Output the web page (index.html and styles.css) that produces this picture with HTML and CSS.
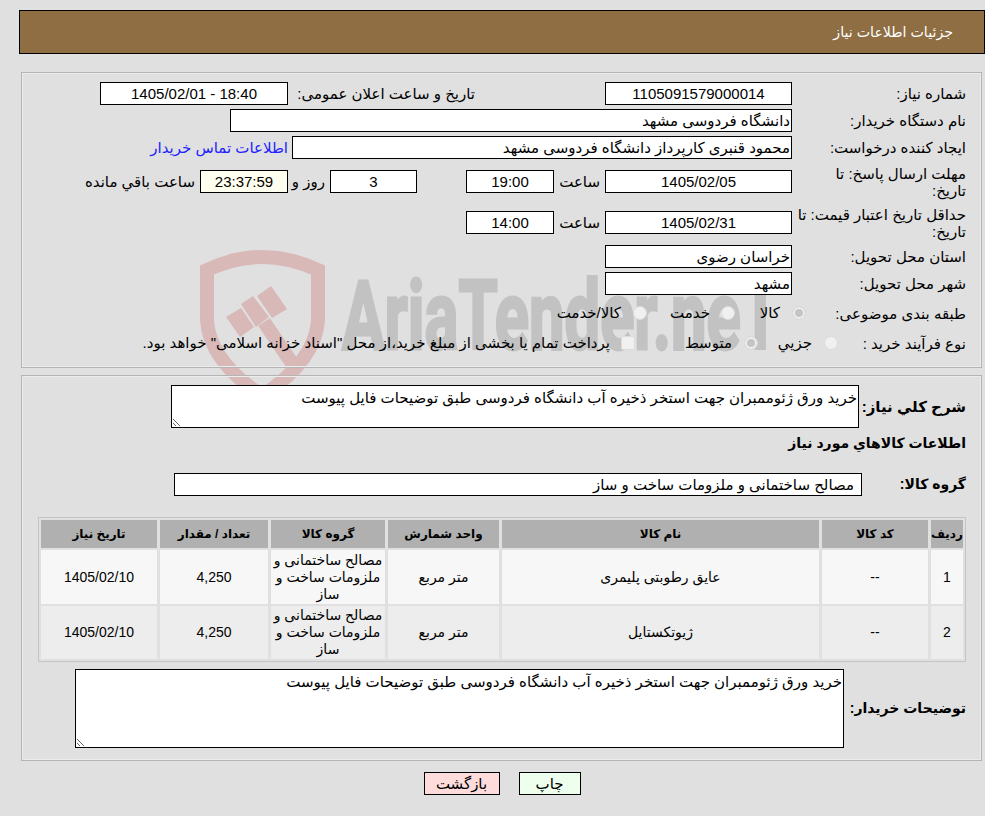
FILE: index.html
```html
<!DOCTYPE html>
<html lang="fa" dir="rtl">
<head>
  <meta charset="UTF-8" />
  <meta name="viewport" content="width=device-width, initial-scale=1.0"/>
  <title>جزئیات اطلاعات نیاز</title>
  <link rel="stylesheet" href="styles.css">
</head>
<body>

<!-- watermark behind the form -->
<svg class="watermark" width="985" height="816" viewBox="0 0 985 816" aria-hidden="true">
  <g fill="none" stroke="#d9b8b8" stroke-width="14">
    <path d="M207 270 Q262 244 318 270 L318 320 Q316 360 262 396 Q209 360 207 320 Z"/>
    <path d="M264 322 L298 372"/>
  </g>
  <g fill="#d9b8b8">
    <path d="M226 317 L241 308 L254 327 L240 337 Z"/>
    <path d="M241 304 L253 296 L269 317 L256 327 Z"/>
    <path d="M257 296 L271 286 L287 309 L272 318 Z"/>
  </g>
  <text class="wm-text" x="342" y="349" textLength="438" lengthAdjust="spacingAndGlyphs">AriaTender.neT</text>
</svg>

<div class="page-title">جزئیات اطلاعات نیاز</div>

<div class="panel panel-top">
  <div class="row">
    <div class="lbl">شماره نیاز:</div>
    <div class="box w-187 center">1105091579000014</div>
    <div class="lbl lbl-announce">تاریخ و ساعت اعلان عمومی:</div>
    <div class="box w-188 center">18:40 - 1405/02/01</div>
  </div>
  <div class="row">
    <div class="lbl">نام دستگاه خریدار:</div>
    <div class="box w-562">دانشگاه فردوسی مشهد</div>
  </div>
  <div class="row">
    <div class="lbl">ایجاد کننده درخواست:</div>
    <div class="box w-500">محمود قنبری کارپرداز دانشگاه فردوسی مشهد</div>
    <a class="contact" href="#">اطلاعات تماس خریدار</a>
  </div>
  <div class="row row-date">
    <div class="lbl lbl-two">مهلت ارسال پاسخ: تا<br>تاریخ:</div>
    <div class="box w-187 center">1405/02/05</div>
    <div class="lbl-time">ساعت</div>
    <div class="box w-88 center">19:00</div>
    <div class="box w-87 center days">3</div>
    <div class="lbl-days">روز و</div>
    <div class="box w-88 center remain">23:37:59</div>
    <div class="lbl-remain">ساعت باقي مانده</div>
  </div>
  <div class="row row-date2">
    <div class="lbl lbl-two">حداقل تاریخ اعتبار قیمت: تا<br>تاریخ:</div>
    <div class="box w-187 center">1405/02/31</div>
    <div class="lbl-time">ساعت</div>
    <div class="box w-88 center">14:00</div>
  </div>
  <div class="row">
    <div class="lbl">استان محل تحویل:</div>
    <div class="box w-187">خراسان رضوی</div>
  </div>
  <div class="row">
    <div class="lbl">شهر محل تحویل:</div>
    <div class="box w-187">مشهد</div>
  </div>
  <div class="row row-radio row-category">
    <div class="lbl lbl-category">طبقه بندی موضوعی:</div>
    <span class="radio on"></span><span class="opt opt-kala">کالا</span>
    <span class="radio"></span><span class="opt opt-service">خدمت</span>
    <span class="radio"></span><span class="opt">کالا/خدمت</span>
  </div>
  <div class="row row-radio row-process">
    <div class="lbl lbl-process">نوع فرآیند خرید :</div>
    <span class="radio"></span><span class="opt opt-small">جزیي</span>
    <span class="radio on"></span><span class="opt opt-medium">متوسط</span>
    <span class="check"></span><span class="opt">پرداخت تمام یا بخشی از مبلغ خرید،از محل "اسناد خزانه اسلامی" خواهد بود.</span>
  </div>
</div>

<div class="panel panel-main">
  <div class="row">
    <div class="lbl-bold lbl-desc">شرح کلي نیاز:</div>
    <textarea class="area area-desc" readonly>خرید ورق ژئوممبران جهت استخر ذخیره آب دانشگاه فردوسی طبق توضیحات فایل پیوست</textarea>
  </div>
  <div class="section-title">اطلاعات کالاهاي مورد نیاز</div>
  <div class="row row-group">
    <div class="lbl-bold lbl-group">گروه کالا:</div>
    <div class="box w-688 group-box">مصالح ساختمانی و ملزومات ساخت و ساز</div>
  </div>

  <div class="table-wrap">
    <table class="items">
      <thead>
        <tr>
          <th class="c-row">ردیف</th>
          <th class="c-code">کد کالا</th>
          <th class="c-name">نام کالا</th>
          <th class="c-unit">واحد شمارش</th>
          <th class="c-group">گروه کالا</th>
          <th class="c-qty">تعداد / مقدار</th>
          <th class="c-date">تاریخ نیاز</th>
        </tr>
      </thead>
      <tbody>
        <tr class="odd">
          <td>1</td>
          <td>--</td>
          <td>عایق رطوبتی پلیمری</td>
          <td>متر مربع</td>
          <td>مصالح ساختمانی و ملزومات ساخت و ساز</td>
          <td>4,250</td>
          <td>1405/02/10</td>
        </tr>
        <tr class="even">
          <td>2</td>
          <td>--</td>
          <td>ژیوتکستایل</td>
          <td>متر مربع</td>
          <td>مصالح ساختمانی و ملزومات ساخت و ساز</td>
          <td>4,250</td>
          <td>1405/02/10</td>
        </tr>
      </tbody>
    </table>
  </div>

  <div class="row row-notes">
    <div class="lbl-bold lbl-notes">توضیحات خریدار:</div>
    <textarea class="area area-notes" readonly>خرید ورق ژئوممبران جهت استخر ذخیره آب دانشگاه فردوسی طبق توضیحات فایل پیوست</textarea>
  </div>
</div>

<div class="actions">
  <button class="btn btn-print">چاپ</button>
  <button class="btn btn-back">بازگشت</button>
</div>

</body>
</html>
```

FILE: styles.css
```css
html, body {
  height: 100%;
}

body {
  margin: 0;
  padding: 10px 3px 0 20px;
  box-sizing: border-box;
  background: #e0e0e0;
  color: #000;
  font-family: "Liberation Sans", "DejaVu Sans", sans-serif;
  font-size: 15px;
  overflow: hidden;
}

.watermark {
  position: absolute;
  top: 0;
  left: 0;
  z-index: -1;
}

.wm-text {
  direction: ltr;
  font-family: "Roboto", sans-serif;
  font-weight: 700;
  font-size: 96px;
  fill: #c2c2c2;
  stroke: #c2c2c2;
  stroke-width: 3px;
}

.page-title {
  height: 42px;
  line-height: 42px;
  margin: 0 -3px 0 -1px;
  padding-right: 31px;
  background: #8e6e42;
  border: 1px solid #000;
  color: #fff;
  font-size: 14.2px;
}

.panel {
  margin-left: 1px;
  border: 1px solid #b4b4b4;
  box-shadow: inset 0 0 0 1px #ececec;
  box-sizing: border-box;
  padding-right: 15px;
}

.panel-top {
  margin-top: 18px;
  height: 296px;
  padding-top: 9px;
}

.panel-main {
  margin-top: 7px;
  height: 386px;
  padding-top: 9px;
}

.row {
  display: flex;
  align-items: flex-start;
  margin-bottom: 4px;
}

.row-date { margin-top: 11px; height: 37px; }
.row-date2 { height: 30px; }

.lbl {
  width: 174px;
  flex: none;
  line-height: 17px;
  padding-top: 3px;
  box-sizing: border-box;
  padding-left: 4px;
}

.lbl-two {
  margin-top: -5px;
  padding-top: 0;
}

.lbl-announce {
  width: 183px;
  margin-right: 130px;
  padding-left: 0;
}

.box {
  height: 23px;
  line-height: 21px;
  box-sizing: border-box;
  border: 1px solid #000;
  background: #fff;
  padding: 0 1px;
  flex: none;
  white-space: nowrap;
  overflow: hidden;
}

.center { text-align: center; }

.w-87 { width: 87px; }
.w-88 { width: 88px; }
.w-187 { width: 187px; }
.w-188 { width: 188px; margin-right: 4px; }
.w-500 { width: 500px; }
.w-562 { width: 562px; }
.w-688 { width: 688px; }

.group-box { padding-right: 7px; }

.contact {
  margin-right: 4px;
  line-height: 23px;
  color: #2222ff;
  text-decoration: none;
  white-space: nowrap;
}

.lbl-time {
  width: 51px;
  line-height: 23px;
  text-align: right;
  padding-right: 5px;
  box-sizing: border-box;
}

.days { margin-right: 49px; }
.lbl-days { width: 42px; line-height: 23px; padding-right: 5px; box-sizing: border-box; }
.remain { background: #fffff0; }
.lbl-remain { margin-right: 5px; line-height: 23px; white-space: nowrap; }

.row-radio {
  align-items: center;
  height: 18px;
  margin-bottom: 0;
}

.row-category { margin-top: 9px; }
.row-process { margin-top: 12px; }

.lbl-category { width: 160px; padding: 0; }
.lbl-process { width: 128px; padding: 0; }

.radio {
  width: 14px;
  height: 14px;
  flex: none;
  box-sizing: border-box;
  border-radius: 50%;
  background: #f0f0f0;
  border: 1px solid #dcdcdc;
  margin-left: 12px;
}

.radio.on {
  background: #c4c4c4;
  box-shadow: inset 0 0 0 2px #f0f0f0;
}

.check {
  width: 14px;
  height: 14px;
  flex: none;
  box-sizing: border-box;
  border-radius: 2px;
  background: #f0f0f0;
  border: 1px solid #dcdcdc;
  margin-left: 11px;
}

.opt { white-space: nowrap; }
.opt-kala { width: 45px; }
.opt-service { width: 63px; margin-right: -1px; }
.opt-small { width: 54px; }
.opt-medium { width: 97px; }

.lbl-bold {
  font-weight: bold;
  font-size: 14px;
  flex: none;
}

.lbl-desc { width: 107px; padding-top: 13px; font-size: 15px; }
.lbl-group { width: 104px; padding-top: 3px; }
.lbl-notes { width: 122px; padding-top: 31px; }

.area {
  display: block;
  flex: none;
  box-sizing: border-box;
  margin: 0;
  padding: 3px 1px;
  border: 1px solid #000;
  background: #fff;
  color: #000;
  font-family: inherit;
  font-size: 15px;
  outline: none;
  resize: both;
}

.area-desc { width: 688px; height: 43px; }
.area-notes { width: 769px; height: 79px; }

.section-title {
  font-weight: bold;
  font-size: 14px;
  margin-top: 6px;
  line-height: 18px;
}

.row-group { margin-top: 21px; margin-bottom: 0; }

.table-wrap {
  margin-top: 21px;
  width: 928px;
  box-sizing: border-box;
  border: 1px solid #c4c4c4;
}

.items {
  width: 928px;
  margin: 0 -1px;
  table-layout: fixed;
  border-collapse: separate;
  border-spacing: 3px 2px;
  font-size: 14px;
}

.items th {
  height: 28px;
  padding: 0;
  background: #b0b0b0;
  font-weight: bold;
  font-size: 12px;
}

.items td {
  padding: 0;
  text-align: center;
  line-height: 17px;
}

.odd td { height: 54px; background: #f7f7f7; }
.even td { height: 53px; background: #ededed; }

.c-row { width: 32px; }
.c-code { width: 106px; }
.c-name { width: 317px; }
.c-unit { width: 111px; }
.c-group { width: 114px; }
.c-qty { width: 108px; }
.c-date { width: 116px; }

.row-notes { margin-top: 7px; }

.actions {
  display: flex;
  justify-content: center;
  gap: 19px;
  margin-top: 11px;
  padding-left: 2px;
}

.btn {
  height: 23px;
  box-sizing: border-box;
  border: 1px solid #000;
  padding: 0;
  font-family: inherit;
  font-size: 15px;
  color: #000;
}

.btn-back { width: 76px; background: #ffdcdc; }
.btn-print { width: 62px; background: #eeffee; }
```
